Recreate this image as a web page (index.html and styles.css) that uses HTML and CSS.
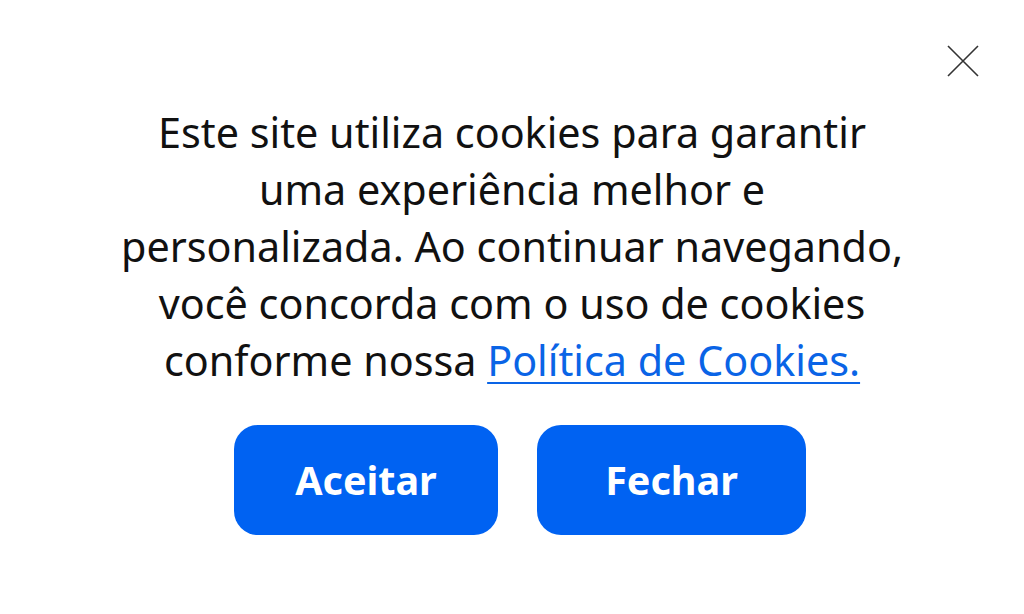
FILE: index.html
```html
<!DOCTYPE html>
<html lang="pt-BR">
<head>
  <meta charset="UTF-8">
  <meta name="viewport" content="width=device-width, initial-scale=1.0">
  <title>Cookies</title>
  <link rel="stylesheet" href="styles.css">
</head>
<body>
  <div class="banner">
    <button class="close" aria-label="Fechar">
      <svg width="32" height="32" viewBox="0 0 32 32">
        <path d="M1 1 L31 31 M31 1 L1 31" stroke="#333" stroke-width="1.6" fill="none"/>
      </svg>
    </button>

    <p class="message">
      Este site utiliza cookies para garantir<br>
      uma experiência melhor e<br>
      personalizada. Ao continuar navegando,<br>
      você concorda com o uso de cookies<br>
      conforme nossa <a href="#">Política de Cookies.</a>
    </p>

    <div class="actions">
      <button class="btn btn-accept">Aceitar</button>
      <button class="btn btn-close">Fechar</button>
    </div>
  </div>
</body>
</html>
```

FILE: styles.css
```css
body { margin: 0; background-color: #fff; font-family: "Noto Sans", "Open Sans", sans-serif; color: #111; }
.banner { position: relative; height: 614px; padding-top: 104px; box-sizing: border-box; display: flex; flex-direction: column; align-items: center; }
.close { position: absolute; top: 45px; right: 45px; background: none; border: none; padding: 0; cursor: pointer; line-height: 0; }
.message { margin: 0; font-size: 41.3px; line-height: 57px; text-align: center; }
.message a { color: #0a64e6; text-decoration: underline; text-underline-offset: 6px; text-decoration-thickness: 2px; }
.actions { display: flex; gap: 39px; margin-top: 36px; margin-left: 16px; }
.btn { height: 110px; border: none; border-radius: 24px; background-color: #0062f2; color: #fff; font-family: "Noto Sans", sans-serif; font-weight: bold; font-size: 39.5px; cursor: pointer; }
.btn-accept { width: 264px; }
.btn-close { width: 269px; }
.btn:hover { background-color: #0052cc; }
```
